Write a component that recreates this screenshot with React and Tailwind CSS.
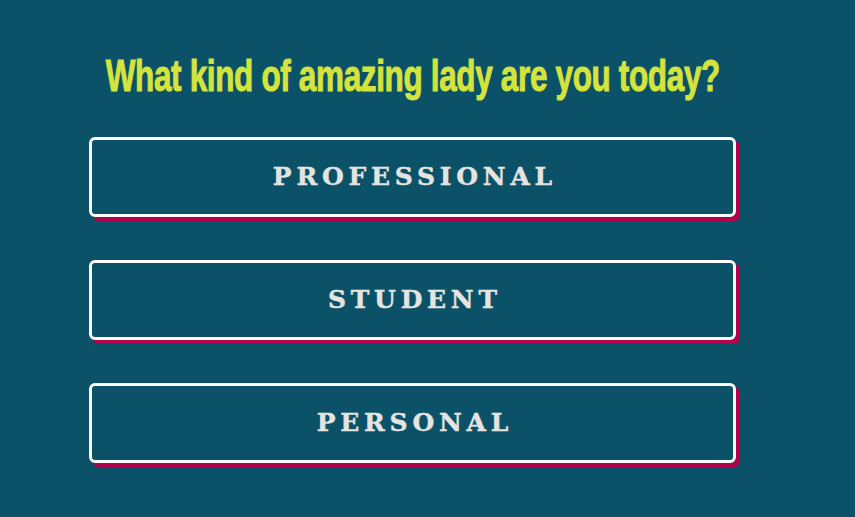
export default function App() {
  const options = ['PROFESSIONAL', 'STUDENT', 'PERSONAL']

  return (
    <div className="w-[855px] h-[517px] bg-[#0b5168] overflow-hidden">
      <div className="pl-[89px] w-[736px] pt-[50px]">
        <h1 className="flex justify-center h-[52px]">
          <span
            className="inline-block whitespace-nowrap text-[#d5e43c] text-[45px] leading-[52px] font-bold tracking-[-0.5px] scale-x-[0.7] [-webkit-text-stroke:1px_#d5e43c]"
            style={{ fontFamily: '"Liberation Sans", Arial, sans-serif' }}
          >
            What kind of amazing lady are you today?
          </span>
        </h1>
        <div className="mt-[35px] flex flex-col gap-[43px]">
          {options.map((label) => (
            <button
              key={label}
              className="h-[80px] w-full rounded-[6px] border-[3px] border-white shadow-[4px_4px_0_#b5004e] flex items-center justify-center"
            >
              <span
                className="text-[#e4e4e0] text-[25px] font-bold tracking-[0.19em] pl-[0.19em] [-webkit-text-stroke:0.4px_#e4e4e0]"
                style={{ fontFamily: '"DejaVu Serif", serif' }}
              >
                {label}
              </span>
            </button>
          ))}
        </div>
      </div>
    </div>
  )
}
